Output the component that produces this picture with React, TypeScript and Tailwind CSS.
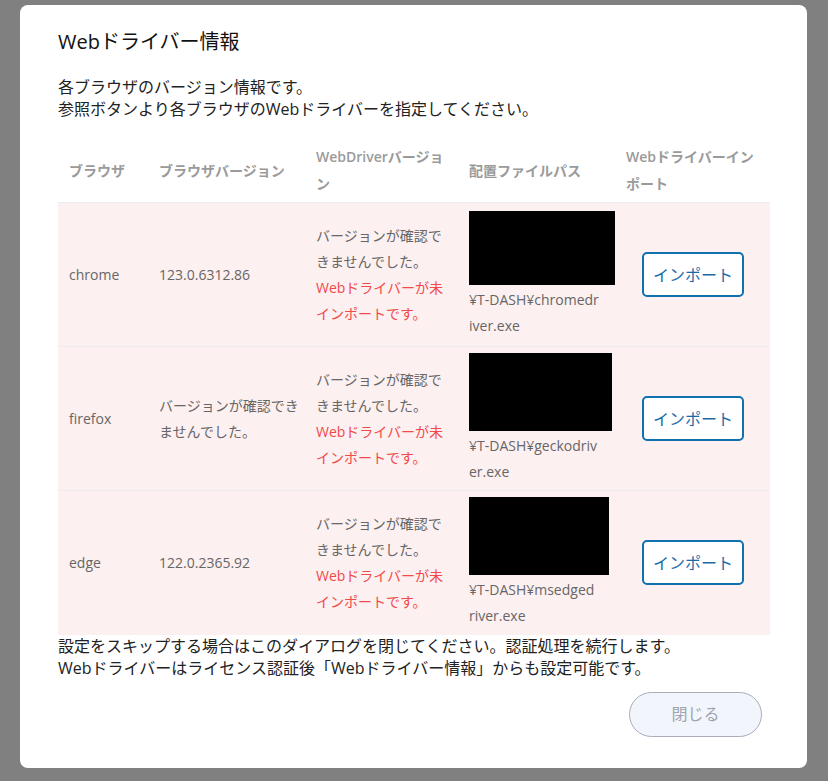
const FONT = { fontFamily: '"Open Sans", "Noto Sans CJK JP", sans-serif' };

type Row = {
  browser: string;
  version: string[];
  path: string[];
  boxW: number;
  boxH: number;
};

const rows: Row[] = [
  { browser: 'chrome', version: ['123.0.6312.86'], path: ['¥T-DASH¥chromedr', 'iver.exe'], boxW: 146, boxH: 74 },
  { browser: 'firefox', version: ['バージョンが確認でき', 'ませんでした。'], path: ['¥T-DASH¥geckodriv', 'er.exe'], boxW: 143, boxH: 78 },
  { browser: 'edge', version: ['122.0.2365.92'], path: ['¥T-DASH¥msedged', 'river.exe'], boxW: 140, boxH: 78 },
];

export default function App() {
  return (
    <div className="w-[828px] h-[781px] bg-[#808080] pt-[5px] pl-[20px]" style={FONT}>
      <div className="w-[787px] h-[763px] bg-white rounded-[8px] pl-[38px] pr-[37px] pt-[23px]">
        <h1 className="text-[20px] leading-[28px] text-[#111]">Webドライバー情報</h1>

        <div className="mt-[20px] text-[16px] leading-[22px] text-[#222]">
          <p>各ブラウザのバージョン情報です。</p>
          <p>参照ボタンより各ブラウザのWebドライバーを指定してください。</p>
        </div>

        <table className="mt-[18px] w-[712px] table-fixed border-collapse">
          <colgroup>
            <col className="w-[90px]" />
            <col className="w-[157px]" />
            <col className="w-[153px]" />
            <col className="w-[157px]" />
            <col className="w-[155px]" />
          </colgroup>
          <thead>
            <tr className="text-left text-[14px] leading-[27px] text-[#9a9a9a]">
              <th className="pl-[11px] pr-[6px] py-[5px] font-semibold whitespace-nowrap">ブラウザ</th>
              <th className="pl-[11px] pr-[6px] py-[5px] font-semibold whitespace-nowrap">ブラウザバージョン</th>
              <th className="pl-[11px] pr-[6px] py-[5px] font-semibold">
                <div className="whitespace-nowrap">WebDriverバージョ</div>
                <div>ン</div>
              </th>
              <th className="pl-[11px] pr-[6px] py-[5px] font-semibold whitespace-nowrap">配置ファイルパス</th>
              <th className="pl-[11px] pr-[6px] py-[5px] font-semibold">
                <div className="whitespace-nowrap">Webドライバーイン</div>
                <div>ポート</div>
              </th>
            </tr>
          </thead>
          <tbody>
            {rows.map((r) => (
              <tr key={r.browser} className="h-[144px] bg-[#fdf0f0] border-t border-[#ececf0] text-[14px] leading-[26px] text-[#666]">
                <td className="pl-[11px] pr-[6px] align-middle">{r.browser}</td>
                <td className="pl-[11px] pr-0 align-middle whitespace-nowrap">
                  {r.version.map((v) => (
                    <div key={v}>{v}</div>
                  ))}
                </td>
                <td className="pl-[11px] pr-0 align-middle whitespace-nowrap">
                  <div>バージョンが確認で</div>
                  <div>きませんでした。</div>
                  <div className="text-[#f04a4a]">Webドライバーが未</div>
                  <div className="text-[#f04a4a]">インポートです。</div>
                </td>
                <td className="pl-[11px] pr-0 align-middle whitespace-nowrap">
                  <div className="bg-black" style={{ width: r.boxW, height: r.boxH }} />
                  <div className="mt-[2px]">
                    {r.path.map((p) => (
                      <div key={p}>{p}</div>
                    ))}
                  </div>
                </td>
                <td className="pl-[27px] align-middle">
                  <button className="w-[102px] h-[45px] border-2 border-[#1070b0] rounded-[5px] bg-white text-[16px] text-[#1a6aa8]">
                    インポート
                  </button>
                </td>
              </tr>
            ))}
          </tbody>
        </table>

        <div className="text-[16px] leading-[22px] text-[#222]">
          <p>設定をスキップする場合はこのダイアログを閉じてください。認証処理を続行します。</p>
          <p>Webドライバーはライセンス認証後「Webドライバー情報」からも設定可能です。</p>
        </div>

        <div className="flex justify-end mt-[13px] pr-[8px]">
          <button className="w-[133px] h-[45px] rounded-full border border-[#a9adbb] bg-[#f2f6fc] text-[16px] text-[#a0a4b0]">
            閉じる
          </button>
        </div>
      </div>
    </div>
  );
}
